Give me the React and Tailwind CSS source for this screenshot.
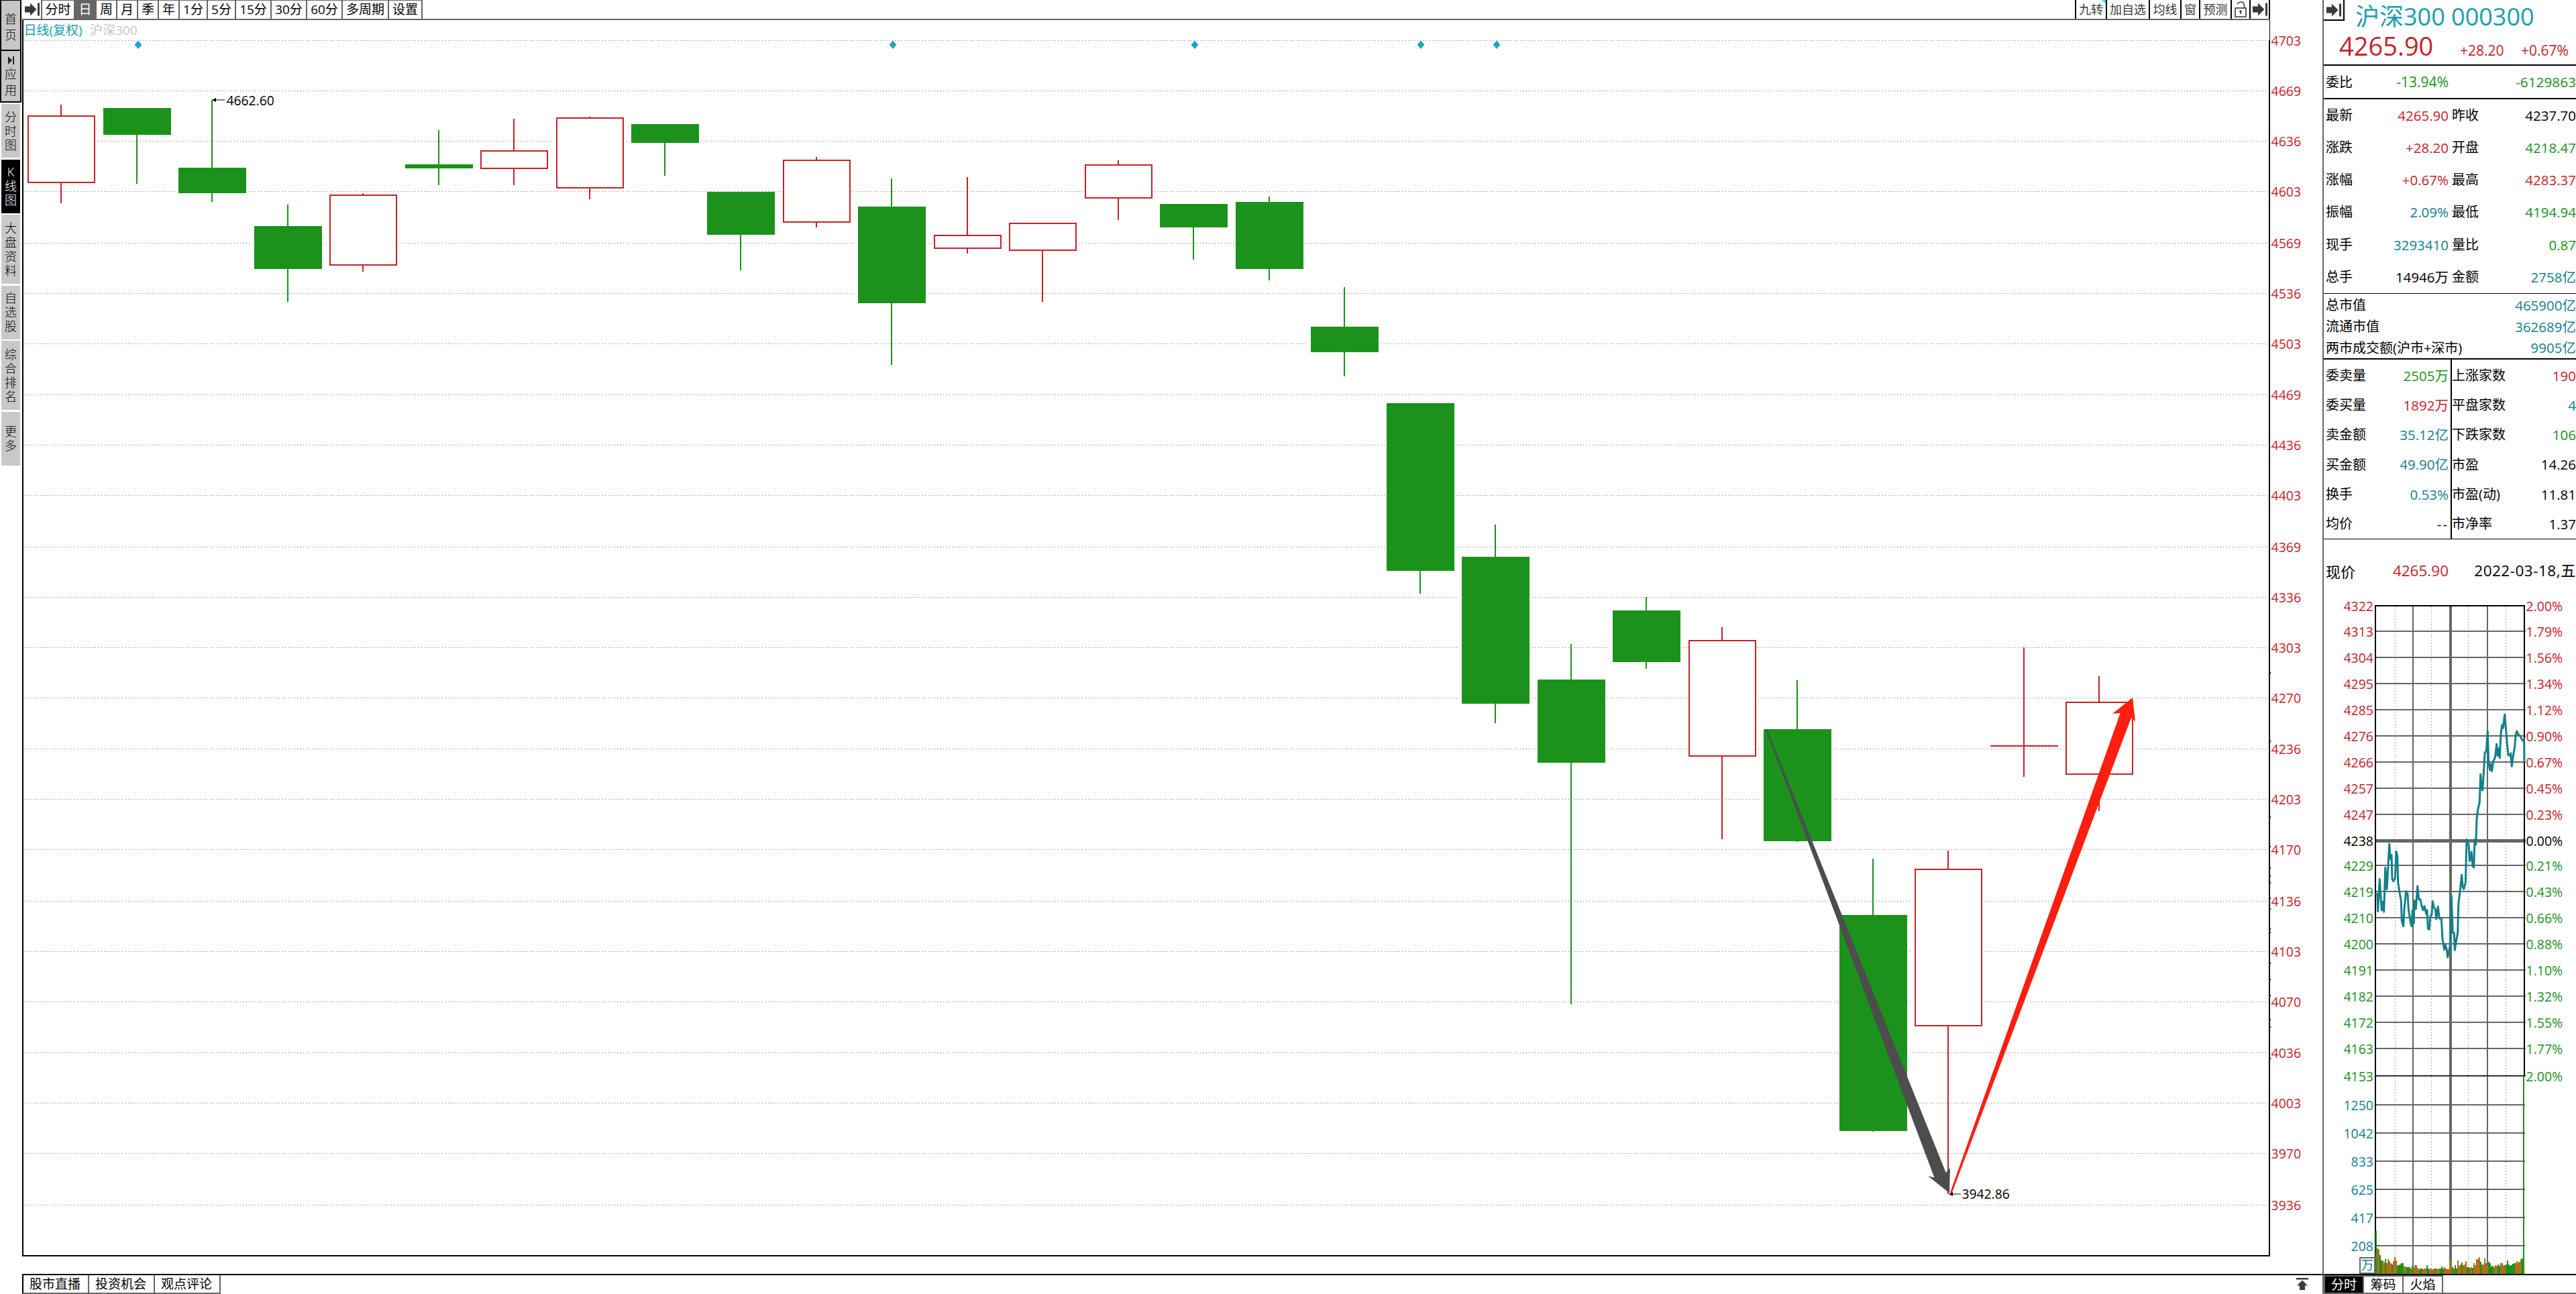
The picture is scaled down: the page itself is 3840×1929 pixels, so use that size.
import { clsx } from 'clsx'

const RED = '#c5222a'
const GREEN = '#1b921b'
const GRAY = '#666666'
const TEAL = '#13808a'

const periods = [
  { label: '分时', w: 'w-[49px]' },
  { label: '日', w: 'w-[32px]', active: true },
  { label: '周', w: 'w-[31px]' },
  { label: '月', w: 'w-[31px]' },
  { label: '季', w: 'w-[31px]' },
  { label: '年', w: 'w-[31px]' },
  { label: '1分', w: 'w-[42px]' },
  { label: '5分', w: 'w-[42px]' },
  { label: '15分', w: 'w-[53px]' },
  { label: '30分', w: 'w-[53px]' },
  { label: '60分', w: 'w-[53px]' },
  { label: '多周期', w: 'w-[69px]' },
  { label: '设置', w: 'w-[50px]' },
]

const tools = [
  { label: '九转', w: 'w-[46px]', hot: true },
  { label: '加自选', w: 'w-[64px]' },
  { label: '均线', w: 'w-[47px]' },
  { label: '窗', w: 'w-[28px]' },
  { label: '预测', w: 'w-[47px]' },
]

const sideTabs = [
  { label: '分时图', h: 'h-[80px]' },
  { label: 'K线图', h: 'h-[80px]', active: true },
  { label: '大盘资料', h: 'h-[103px]' },
  { label: '自选股', h: 'h-[80px]' },
  { label: '综合排名', h: 'h-[103px]' },
  { label: '更多', h: 'h-[80px]' },
]

const priceAxis = [
  [4703, 60], [4669, 135], [4636, 210], [4603, 285], [4569, 362], [4536, 437],
  [4503, 512], [4469, 588], [4436, 663], [4403, 738], [4369, 815], [4336, 890],
  [4303, 965], [4270, 1040], [4236, 1116], [4203, 1191], [4170, 1266], [4136, 1343],
  [4103, 1418], [4070, 1493], [4036, 1569], [4003, 1644], [3970, 1719], [3936, 1796],
]

// [up, wick top, body top, body bottom, wick bottom]
const candles = [
  [1, 156, 172, 273, 303],
  [0, 161, 161, 201, 274],
  [0, 149, 250, 288, 301],
  [0, 305, 337, 401, 450],
  [1, 288, 290, 396, 405],
  [0, 194, 245, 251, 276],
  [1, 177, 224, 252, 276],
  [1, 174, 175, 281, 297],
  [0, 185, 185, 213, 262],
  [0, 286, 286, 350, 403],
  [1, 234, 238, 332, 339],
  [0, 266, 308, 452, 544],
  [1, 264, 350, 371, 378],
  [1, 332, 332, 374, 450],
  [1, 239, 245, 296, 328],
  [0, 304, 304, 339, 387],
  [0, 293, 301, 401, 418],
  [0, 428, 487, 525, 561],
  [0, 601, 601, 851, 885],
  [0, 782, 830, 1049, 1078],
  [0, 960, 1013, 1137, 1497],
  [0, 890, 910, 987, 997],
  [1, 935, 954, 1128, 1251],
  [0, 1014, 1087, 1254, 1255],
  [0, 1280, 1364, 1686, 1687],
  [1, 1268, 1295, 1530, 1780],
  [1, 965, 1111, 1113, 1158],
  [1, 1008, 1046, 1155, 1209],
]

const diamonds = [206, 1331, 1781, 2118, 2231]

const axisTicks = [1002, 1104, 1217, 1261, 1293, 1305, 1315, 1338, 1354, 1384, 1389, 1435, 1459, 1483, 1519, 1530, 1577]

const miniAxis = [
  [4322, '2.00%', 903], [4313, '1.79%', 941], [4304, '1.56%', 980], [4295, '1.34%', 1019],
  [4285, '1.12%', 1058], [4276, '0.90%', 1097], [4266, '0.67%', 1136], [4257, '0.45%', 1175],
  [4247, '0.23%', 1214], [4238, '0.00%', 1253], [4229, '0.21%', 1290], [4219, '0.43%', 1329],
  [4210, '0.66%', 1368], [4200, '0.88%', 1407], [4191, '1.10%', 1446], [4182, '1.32%', 1485],
  [4172, '1.55%', 1524], [4163, '1.77%', 1563], [4153, '2.00%', 1604],
]

const volAxis = [[1250, 1647], [1042, 1689], [833, 1731], [625, 1773], [417, 1815], [208, 1857]]

// intraday line, x in thirds of a pixel, y in 1/2.8 of a pixel
const intraday = [
  [303, 1266], [312, 1268], [314, 1340], [322, 1205], [331, 1335], [337, 1300], [341, 1342], [347, 1158],
  [354, 1248], [360, 1150], [365, 1058], [369, 1120], [375, 1105], [378, 1205], [383, 1214], [391, 1203],
  [396, 1090], [401, 1110], [404, 1218], [411, 1262], [418, 1295], [421, 1380], [428, 1402], [432, 1330],
  [440, 1256], [447, 1268], [451, 1330], [458, 1375], [464, 1402], [469, 1335], [475, 1390], [477, 1295],
  [484, 1330], [491, 1235], [497, 1290], [504, 1290], [510, 1318], [516, 1335], [522, 1318], [530, 1350],
  [534, 1335], [538, 1412], [544, 1415], [549, 1360], [554, 1357], [559, 1298], [565, 1325], [571, 1330],
  [575, 1372], [583, 1320], [589, 1370], [598, 1368], [603, 1455], [611, 1500], [617, 1482], [622, 1500],
  [626, 1532], [632, 1505], [637, 1480], [643, 1275], [649, 1430], [655, 1430], [658, 1502], [664, 1465],
  [671, 1430], [674, 1310], [681, 1258], [689, 1188], [693, 1235], [698, 1247], [706, 1222], [711, 1040],
  [720, 1062], [725, 1130], [733, 1092], [738, 1152], [743, 1156], [747, 1040], [752, 1060], [756, 955],
  [762, 912], [769, 885], [773, 768], [777, 820], [782, 835], [790, 720], [792, 678], [799, 672],
  [805, 588], [809, 720], [815, 750], [819, 725], [824, 755], [830, 712], [838, 700], [845, 642],
  [849, 690], [854, 660], [859, 700], [864, 600], [869, 562], [874, 575], [881, 518], [886, 570],
  [892, 640], [897, 688], [904, 690], [908, 680], [913, 735], [920, 685], [926, 655], [930, 605],
  [935, 588], [941, 600], [950, 608], [958, 622], [963, 628], [968, 620], [969, 718],
]

const volumes = [
  64, 38, 37, 28, 20, 20, 17, 22, 16, 22, 19, 16, 14, 19, 25, 20, 13, 13, 14, 16, 16, 11, 11, 10, 10, 10, 8, 12,
  9, 13, 13, 9, 7, 8, 8, 7, 8, 8, 13, 8, 7, 8, 7, 7, 8, 8, 7, 8, 8, 11, 8, 10, 8, 7, 7, 20,
  20, 10, 8, 13, 8, 20, 12, 14, 17, 13, 14, 19, 10, 10, 9, 10, 9, 16, 13, 22, 22, 25, 18, 14, 14, 23, 16, 14,
  18, 16, 11, 12, 10, 13, 12, 14, 12, 16, 16, 13, 13, 14, 20, 14, 12, 13, 15, 16, 16, 19, 17, 18, 22, 23, 25,
]
// g = green bar, anything else is a brown one
const volumeSides =
  'gbbggbbgbbbbgbbbgggggbbgggbgbbbbbggbbbggbbbbgbbbgggbbbbbbgbggbbbgbbbggbbgbbbbbgbbbbbggggbbbggbbbbgggggggbbbbbgg'

const quotes = [
  ['最新', '4265.90', 'text-[#c5222a]', '昨收', '4237.70', 'text-black'],
  ['涨跌', '+28.20', 'text-[#c5222a]', '开盘', '4218.47', 'text-[#1b921b]'],
  ['涨幅', '+0.67%', 'text-[#c5222a]', '最高', '4283.37', 'text-[#c5222a]'],
  ['振幅', '2.09%', 'text-[#13808a]', '最低', '4194.94', 'text-[#1b921b]'],
  ['现手', '3293410', 'text-[#13808a]', '量比', '0.87', 'text-[#1b921b]'],
  ['总手', '14946万', 'text-black', '金额', '2758亿', 'text-[#13808a]'],
]

const totals = [
  ['总市值', '465900亿'],
  ['流通市值', '362689亿'],
  ['两市成交额(沪市+深市)', '9905亿'],
]

const details = [
  ['委卖量', '2505万', 'text-[#1b921b]', '上涨家数', '190', 'text-[#c5222a]'],
  ['委买量', '1892万', 'text-[#c5222a]', '平盘家数', '4', 'text-[#13808a]'],
  ['卖金额', '35.12亿', 'text-[#13808a]', '下跌家数', '106', 'text-[#1b921b]'],
  ['买金额', '49.90亿', 'text-[#13808a]', '市盈', '14.26', 'text-black'],
  ['换手', '0.53%', 'text-[#13808a]', '市盈(动)', '11.81', 'text-black'],
  ['均价', '--', 'text-black tracking-[2px]', '市净率', '1.37', 'text-black'],
]

function ArrowToBar({ className }) {
  return (
    <svg className={className} width="22" height="20" viewBox="0 0 22 20" fill="#3a3a3a">
      <path d="M0 5.5h8V0.5l9.5 9.5L8 19.5v-5H0z" />
      <rect x="19" y="0.5" width="3" height="19" />
    </svg>
  )
}

function SideNav() {
  return (
    <nav className="flex w-[33px] shrink-0 flex-col text-center text-[18px] font-light leading-[21px] text-black">
      <div className="flex h-[153px] w-8 flex-col gap-[2px] bg-black p-[2px] pt-px leading-6">
        <div className="flex h-[73px] flex-col justify-center bg-[#c8c5c8] pt-1">
          <span>首</span>
          <span>页</span>
        </div>
        <div className="flex flex-1 flex-col items-center bg-[#c8c5c8] pt-2">
          <svg width="9" height="12" viewBox="0 0 9 12" className="mb-[2px]">
            <path d="M0 0l6 6-6 6zM7 0h2v12H7z" fill="#222" />
          </svg>
          <span>应</span>
          <span>用</span>
        </div>
      </div>
      <div className="mt-[2px] flex flex-col gap-[2.6px] pl-[2px]">
        {sideTabs.map((t) => (
          <div
            key={t.label}
            className={clsx(
              'flex w-7 flex-col items-center justify-center',
              t.h,
              t.active ? 'bg-black text-white' : 'bg-[#c8c8c8]'
            )}
          >
            {t.label.split('').map((c) => (
              <span key={c}>{c}</span>
            ))}
          </div>
        ))}
      </div>
    </nav>
  )
}

function Toolbar() {
  return (
    <div className="flex h-[30px] w-[3351px] border-b-2 border-[#666] text-[19px]">
      <div className="flex w-[30px] items-center justify-center border-r-2 border-[#666] pl-px">
        <ArrowToBar />
      </div>
      {periods.map((p) => (
        <div
          key={p.label}
          className={clsx(
            'flex items-center justify-center whitespace-nowrap border-r-2 border-t border-[#666]',
            p.w,
            p.active && 'bg-[#666] text-white'
          )}
        >
          {p.label}
        </div>
      ))}
      <div className="ml-auto flex border-l-2 border-black text-[18px] text-[#3a3a3a]">
        {tools.map((t) => (
          <div
            key={t.label}
            className={clsx('relative flex items-center justify-center whitespace-nowrap border-r-2 border-black', t.w)}
          >
            {t.label}
            {t.hot && (
              <svg className="absolute right-0 top-0" width="6" height="5">
                <path d="M0 0h6v5z" fill="#00f0ff" />
              </svg>
            )}
          </div>
        ))}
        <div className="flex w-[28px] items-center justify-center border-r-2 border-black">
          <svg width="18" height="24" viewBox="0 0 18 24" fill="none" stroke="#3a3a3a" strokeWidth="1.6">
            <rect x="1" y="10" width="16" height="13" />
            <path d="M4 4.5C5 2.500 7 1 9.500 1 12.500 1 14.500 3 14.500 6v4" />
            <circle cx="9" cy="15" r="1" fill="#3a3a3a" />
            <path d="M9 15v4" />
          </svg>
        </div>
        <div className="flex w-[29px] items-center justify-center border-r-2 border-black">
          <ArrowToBar />
        </div>
      </div>
    </div>
  )
}

function Candle({ index, data }) {
  const [up, high, top, bottom, low] = data
  const x = Math.round(41.3 + index * 112.52)
  const mid = x + 49
  const color = up ? RED : GREEN
  const doji = bottom - top <= 2
  return (
    <g>
      <rect x={x - 3} y={top} width={107} height={bottom - top} fill="#fff" />
      <rect x={mid} y={high} width={2} height={low - high} fill={color} />
      {up && !doji ? (
        <rect x={x + 1} y={top + 1} width={99} height={bottom - top - 2} fill="#fff" stroke={color} strokeWidth="2" />
      ) : (
        <rect x={x} y={top} width={101} height={bottom - top} fill={color} />
      )}
    </g>
  )
}

function KLineChart() {
  return (
    <svg className="block" width="3429" height="1869" viewBox="33 30 3429 1869">
      <g shapeRendering="crispEdges">
        {priceAxis.map(([price, y]) => (
          <path key={price} d={`M38 ${y + 0.5}H3382`} stroke={GRAY} strokeDasharray="1 3.5" />
        ))}
        {candles.map((c, i) => (
          <Candle key={i} index={i} data={c} />
        ))}
        <path d="M34 30V1872H3383V60" fill="none" stroke="#000" strokeWidth="2" />
        <path d="M3383.500 30V60" stroke="#000" />
        {axisTicks.map((y) => (
          <rect key={y} x="3384" y={y} width="1" height="2" />
        ))}
      </g>
      {diamonds.map((x) => (
        <path key={x} d={`M${x} 60.500l5.500 6.300-5.500 6.300-5.500-6.300z`} fill="#2e9cc8" />
      ))}

      <g fontSize="19.5" fill={RED}>
        {priceAxis.map(([price, y]) => (
          <text key={price} x="3385.500" y={y + 8}>
            {price}
          </text>
        ))}
      </g>

      <text x="35.500" y="52" fontSize="19" fill="#1a9dac">日线(复权)</text>
      <text x="134" y="52" fontSize="19" fill="#c4c4c4">沪深300</text>

      <path d="M316 149l6-3v6zM321 148.500h14v1h-14z" />
      <text x="337.500" y="157" fontSize="19.3">4662.60</text>

      {/* trend arrows */}
      <path d="M2632 1087L2883.500 1755.500 2874 1753 2906 1778.500 2907 1741 2900.700 1748 2634 1087z" fill="#4d4d4d" />
      <path d="M2907 1778L3160.700 1063 3149 1064 3179 1040 3183 1076 3177.400 1069 2909.500 1779z" fill="#ff1e10" />

      <path d="M2905 1780l6-3v6zM2910 1779.500h13v1h-13z" />
      <text x="2924.500" y="1787" fontSize="19.3">3942.86</text>
    </svg>
  )
}

function BottomBar() {
  return (
    <div className="flex h-[30px] border-t-2 border-black text-[19px]">
      {['股市直播', '投资机会', '观点评论'].map((t) => (
        <div
          key={t}
          className="flex h-7 w-[98px] items-center justify-center border-b-2 border-r-2 border-[#666] pr-[2px] first:w-[100px] first:border-l-2 first:border-l-black"
        >
          {t}
        </div>
      ))}
      <svg className="ml-auto mr-[21px] mt-1" width="18" height="18" viewBox="0 0 18 18" fill="#3a3a3a">
        <path d="M0 0h18v2.500H0zM9 3.500l8 8h-4V18H5v-6.500H1z" />
      </svg>
    </div>
  )
}

function PairRow({ row }) {
  return (
    <div className="flex flex-1 items-center">
      <div className="flex w-[183px] justify-between">
        <span>{row[0]}</span>
        <span className={clsx('text-[20.5px]', row[2])}>{row[1]}</span>
      </div>
      <div className="ml-[5px] flex flex-1 justify-between">
        <span>{row[3]}</span>
        <span className={clsx('text-[20.5px]', row[5])}>{row[4]}</span>
      </div>
    </div>
  )
}

function MiniChart() {
  const line = intraday.map(([x, y]) => `${(3440 + x / 3).toFixed(1)},${(880 + y / 2.8).toFixed(1)}`).join(' ')
  const labelColor = (i) => (i < 9 ? RED : i === 9 ? '#000' : GREEN)
  return (
    <svg className="block" width="376" height="1019" viewBox="3464 880 376 1019">
      <g shapeRendering="crispEdges" fill="none" stroke={GRAY}>
        {[3570.5, 3624.5, 3679.5, 3735.5].map((x) => (
          <path key={x} d={`M${x} 904V1899`} strokeDasharray="1 3.5" />
        ))}
        {miniAxis.slice(1).map(([p, , y]) => (
          <path key={p} d={`M3541 ${y}H3765`} strokeWidth={p === 4238 ? 5 : 2} />
        ))}
        {volAxis.map(([v, y]) => (
          <path key={v} d={`M3541 ${y}H3764`} strokeWidth="2" />
        ))}
        <path d="M3597 903V1899M3708 903V1899" strokeWidth="2" />
        <path d="M3653 903V1899" strokeWidth="4" />
        <path d="M3541 1875V903H3763V1604" stroke="#000" strokeWidth="2" />
        <path d="M3541 1603.500H3765" stroke="#000" />
        <path d="M3762 1605V1899" stroke={GREEN} strokeWidth="2" />
      </g>
      <g shapeRendering="crispEdges">
        {volumes.map((v, i) => (
          <rect
            key={i}
            x={3541 + i * 2}
            y={1899 - v}
            width="2"
            height={v}
            fill={volumeSides[i] === 'g' ? GREEN : '#ae701c'}
          />
        ))}
      </g>
      <polyline points={line} fill="none" stroke={TEAL} strokeWidth="3" strokeLinejoin="round" />

      <g fontSize="19.5">
        {miniAxis.map(([p, pct, y], i) => (
          <g key={p} fill={labelColor(i)}>
            <text x="3538" y={y + 8} textAnchor="end">{p}</text>
            <text x="3765.500" y={y + 8}>{pct}</text>
          </g>
        ))}
        {volAxis.map(([v, y]) => (
          <text key={v} x="3538" y={y + 8} textAnchor="end" fill={TEAL}>{v}</text>
        ))}
      </g>
      <rect x="3518" y="1875" width="22" height="23" fill="#fff" stroke={GRAY} strokeWidth="2" />
      <text x="3519.500" y="1893" fontSize="19" fill={TEAL}>万</text>
    </svg>
  )
}

function QuotePanel() {
  return (
    <aside className="flex w-[378px] shrink-0 flex-col border-l-2 border-[#666] text-[20px] leading-none">
      <div className="flex h-[96px] items-start">
        <div className="flex h-[31px] w-[31px] shrink-0 items-center justify-center border-b-2 border-r-2 border-black">
          <ArrowToBar />
        </div>
        <div className="flex flex-1 flex-col">
          <div className="h-[50px] whitespace-nowrap pl-4 text-[36px] leading-[50px] text-[#1a9dac]">沪深300 000300</div>
          <div className="-ml-2 flex items-baseline text-[21px] text-[#c5222a]">
            <span className="w-[180px] text-[38px] leading-[36px]">4265.90</span>
            <span className="w-[91px]">+28.20</span>
            <span>+0.67%</span>
          </div>
        </div>
      </div>
      <div className="flex h-[52px] items-center border-y-2 border-black pl-[3px] pt-px">
        <span>委比</span>
        <span className="w-[143px] text-right text-[21px] text-[#1b921b]">-13.94%</span>
        <span className="ml-auto text-[20.8px] text-[#1b921b]">-6129863</span>
      </div>
      <div className="flex h-[289px] flex-col pl-[3px]">
        {quotes.map((r) => (
          <PairRow key={r[0]} row={r} />
        ))}
      </div>
      <div className="flex h-[97px] flex-col border-t border-black pl-[3px] pt-px">
        {totals.map(([k, v]) => (
          <div key={k} className="flex flex-1 items-center justify-between pt-px">
            <span>{k}</span>
            <span className="text-[20.5px] text-[#13808a]">{v}</span>
          </div>
        ))}
      </div>
      <div className="flex h-[270px] border-b border-t-2 border-black pl-[3px]">
        <div className="flex w-[188px] flex-col border-r-2 border-black pr-[3px] pt-[2px]">
          {details.map((r) => (
            <div key={r[0]} className="flex flex-1 items-center justify-between">
              <span>{r[0]}</span>
              <span className={clsx('text-[20.5px]', r[2])}>{r[1]}</span>
            </div>
          ))}
        </div>
        <div className="flex flex-1 flex-col pt-[2px]">
          {details.map((r) => (
            <div key={r[3]} className="flex flex-1 items-center justify-between">
              <span>{r[3]}</span>
              <span className={clsx('text-[20.5px]', r[5])}>{r[4]}</span>
            </div>
          ))}
        </div>
      </div>
      <div className="flex h-[76px] items-center pl-[3px] pt-[19px] text-[22px]">
        <span className="w-[60px]">现价</span>
        <span className="w-[123px] text-right text-[22.5px] text-[#c5222a]">4265.90</span>
        <span className="ml-auto text-[22.500px] tracking-[0.5px]">2022-03-18,五</span>
      </div>
      <MiniChart />
      <div className="flex h-[30px] border-t-2 border-black text-[19px]">
        <div className="flex h-7 w-full border-2 border-r-0 border-[#666]">
          <div className="flex w-[58px] items-center justify-center border-r-2 border-[#666] bg-black text-white">分时</div>
          <div className="flex w-[59px] items-center justify-center border-r-2 border-[#666]">筹码</div>
          <div className="flex w-[59px] items-center justify-center border-r-2 border-[#666]">火焰</div>
          <div className="-mt-[2px] flex-1 border-t-2 border-white" />
        </div>
      </div>
    </aside>
  )
}

export default function App() {
  return (
    <div className="flex h-[1929px] w-[3840px] overflow-hidden bg-white font-['Open_Sans','Noto_Sans_CJK_SC',sans-serif] text-black">
      <SideNav />
      <main className="flex w-[3429px] shrink-0 flex-col">
        <Toolbar />
        <KLineChart />
        <BottomBar />
      </main>
      <QuotePanel />
    </div>
  )
}
